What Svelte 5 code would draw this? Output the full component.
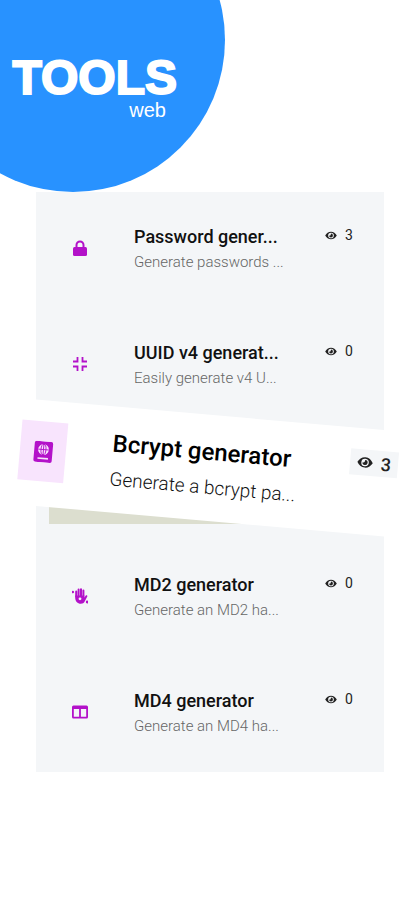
<script>
	const tools = [
		{ name: 'Password gener...', about: 'Generate passwords ...', views: 3, icon: 'lock', slug: 'password' },
		{ name: 'UUID v4 generat...', about: 'Easily generate v4 U...', views: 0, icon: 'compress', slug: 'uuid-v4' },
		{ name: 'Bcrypt generator', about: 'Generate a bcrypt pa...', views: 3, icon: 'passport', slug: 'bcrypt', featured: true },
		{ name: 'MD2 generator', about: 'Generate an MD2 ha...', views: 0, icon: 'hand', slug: 'md2' },
		{ name: 'MD4 generator', about: 'Generate an MD4 ha...', views: 0, icon: 'columns', slug: 'md4' }
	];
</script>

<div class="page">
	<header>
		<div class="circle">
			<h1>TOOLS</h1>
			<span>web</span>
		</div>
	</header>

	<main>
		{#each tools as tool}
			<div class="row" class:featured={tool.featured}>
				<a href="#{tool.slug}">
					<span class="tile">
						<svg viewBox="0 0 16 16" aria-hidden="true">
							{#if tool.icon === 'lock'}
								<path d="M4.5 8V5a3.5 3.5 0 0 1 7 0v3" fill="none" stroke="currentColor" stroke-width="2" />
								<rect x="1" y="7" width="14" height="9" rx="1.5" />
							{:else if tool.icon === 'compress'}
								<path
									d="M5.5 1v4.5H1M10.5 1v4.5H15M5.5 15v-4.5H1M10.5 15v-4.5H15"
									fill="none"
									stroke="currentColor"
									stroke-width="1.8"
								/>
							{:else if tool.icon === 'passport'}
								<rect x="1" y="0" width="14" height="16" rx="1.5" />
								<circle cx="8" cy="6.2" r="4.1" fill="#f8e4fd" />
								<path d="M4 6.2h8M8 2v8.4" stroke="currentColor" stroke-width=".7" />
								<ellipse cx="8" cy="6.2" rx="1.9" ry="4" fill="none" stroke="currentColor" stroke-width=".7" />
								<path d="M4 13h8" stroke="#f8e4fd" stroke-width="1.2" />
							{:else if tool.icon === 'hand'}
								<path
									d="M4.2 8.6V3.4M6.6 8V1.6M9 8V1.2M11.4 8V2.6"
									fill="none"
									stroke="currentColor"
									stroke-width="2"
									stroke-linecap="round"
								/>
								<path d="M3.2 7.5h9.2v2l1.2-1.8c.8-1 2.2-.2 1.7.9l-2.6 4.9c-.8 1.5-2 2.2-3.8 2.2-3.5 0-5.7-2.6-5.7-6z" />
								<circle cx="8" cy="10.8" r="1.4" fill="#f4f6f8" />
								<circle cx=".8" cy="4" r="1.3" />
								<circle cx="15.2" cy="14" r="1.4" />
							{:else}
								<path
									fill-rule="evenodd"
									d="M1.5 1.5h13a1.5 1.5 0 0 1 1.5 1.5v10a1.5 1.5 0 0 1-1.5 1.5h-13a1.5 1.5 0 0 1-1.5-1.5v-10a1.5 1.5 0 0 1 1.5-1.5zM1.8 5v7.7h5.3V5zM8.9 5v7.7h5.3V5z"
								/>
							{/if}
						</svg>
					</span>
					<span class="text">
						<strong>{tool.name}</strong>
						<span class="about">{tool.about}</span>
					</span>
					<span class="views">
						<svg viewBox="0 0 18 14" aria-hidden="true">
							<path
								fill-rule="evenodd"
								d="M9 1c4 0 7 2.6 9 6-2 3.4-5 6-9 6s-7-2.6-9-6c2-3.4 5-6 9-6zM9 2.6a4.4 4.4 0 1 0 0 8.8 4.4 4.4 0 0 0 0-8.8z"
							/>
							<path d="M9 4a3 3 0 1 1-3 3c.9.5 2.2.1 2.5-.8.2-.6.2-1.5.5-2.2z" />
						</svg>
						{tool.views}
					</span>
				</a>
			</div>
		{/each}
	</main>
</div>

<style>
	:global(body) {
		background: #fff;
		overflow-x: hidden;
	}

	.page {
		display: flex;
		flex-direction: column;
		padding-bottom: 128px;
		font-family: Roboto, 'Liberation Sans', sans-serif;
		overflow: hidden;
	}

	header {
		display: flex;
	}

	.circle {
		box-sizing: border-box;
		display: flex;
		flex-direction: column;
		align-items: flex-end;
		width: 304px;
		height: 304px;
		margin: -112px 0 0 -79px;
		padding: 166px 48px 0 0;
		border-radius: 50%;
		background: #2892ff;
		color: #fff;
		font-family: 'Liberation Sans', sans-serif;

		& h1 {
			margin: 0;
			font-size: 48px;
			font-weight: 700;
			line-height: 48px;
			-webkit-text-stroke: 2px #fff;
		}

		& span {
			padding-right: 11px;
			font-size: 20px;
			line-height: 16px;
		}
	}

	main {
		margin: 0 34px 0 36px;
		background: #f4f6f8;
	}

	.row {
		height: 116px;

		& a {
			display: grid;
			grid-template-columns: 16px minmax(0, 1fr) 59px;
			column-gap: 46px;
			box-sizing: border-box;
			height: 100%;
			padding: 33px 0 0 36px;
			color: #111;
			text-decoration: none;
		}
	}

	.tile {
		display: flex;
		align-items: center;
		justify-content: center;
		height: 46px;
		color: #b312c9;

		& svg {
			width: 16px;
			height: 16px;
			fill: currentColor;
		}
	}

	.text {
		display: flex;
		flex-direction: column;
		gap: 3px;
		white-space: nowrap;

		& strong {
			font-size: 18px;
			font-weight: 500;
			line-height: 24px;
		}
	}

	.about {
		color: #666;
		font-size: 15px;
		font-weight: 300;
		line-height: 20px;
	}

	.views {
		display: flex;
		align-items: center;
		gap: 8px;
		height: 20px;
		font-size: 14px;
		color: #222;

		& svg {
			width: 12px;
			height: 9px;
			fill: currentColor;
		}
	}

	/* tilted card that sticks out of the list */
	.featured {
		display: flow-root;
		height: 100px;
		margin: 0 0 16px 13px;
		background: linear-gradient(#dcdecf, #dcdecf) left bottom / 70% 40px no-repeat;

		& a {
			grid-template-columns: 46px minmax(0, 1fr) 48px;
			align-items: start;
			height: 106px;
			margin: -9px -28px 0 -41px;
			padding: 21px 15px 0 11px;
			background: #fff;
			color: #000;
			transform: rotate(5deg);
		}

		& .tile {
			height: 60px;
			background: #f8e4fd;

			& svg {
				width: 21px;
				height: 21px;
			}
		}

		& .text {
			gap: 8px;

			& strong {
				font-size: 24px;
				line-height: 32px;
			}
		}

		& .about {
			color: #111;
			font-size: 19px;
			font-weight: 300;
			line-height: 24px;
		}

		& .views {
			justify-content: center;
			height: 26px;
			background: #f4f6f8;
			font-size: 18px;
			font-weight: 500;

			& svg {
				width: 16px;
				height: 12px;
			}
		}
	}
</style>
